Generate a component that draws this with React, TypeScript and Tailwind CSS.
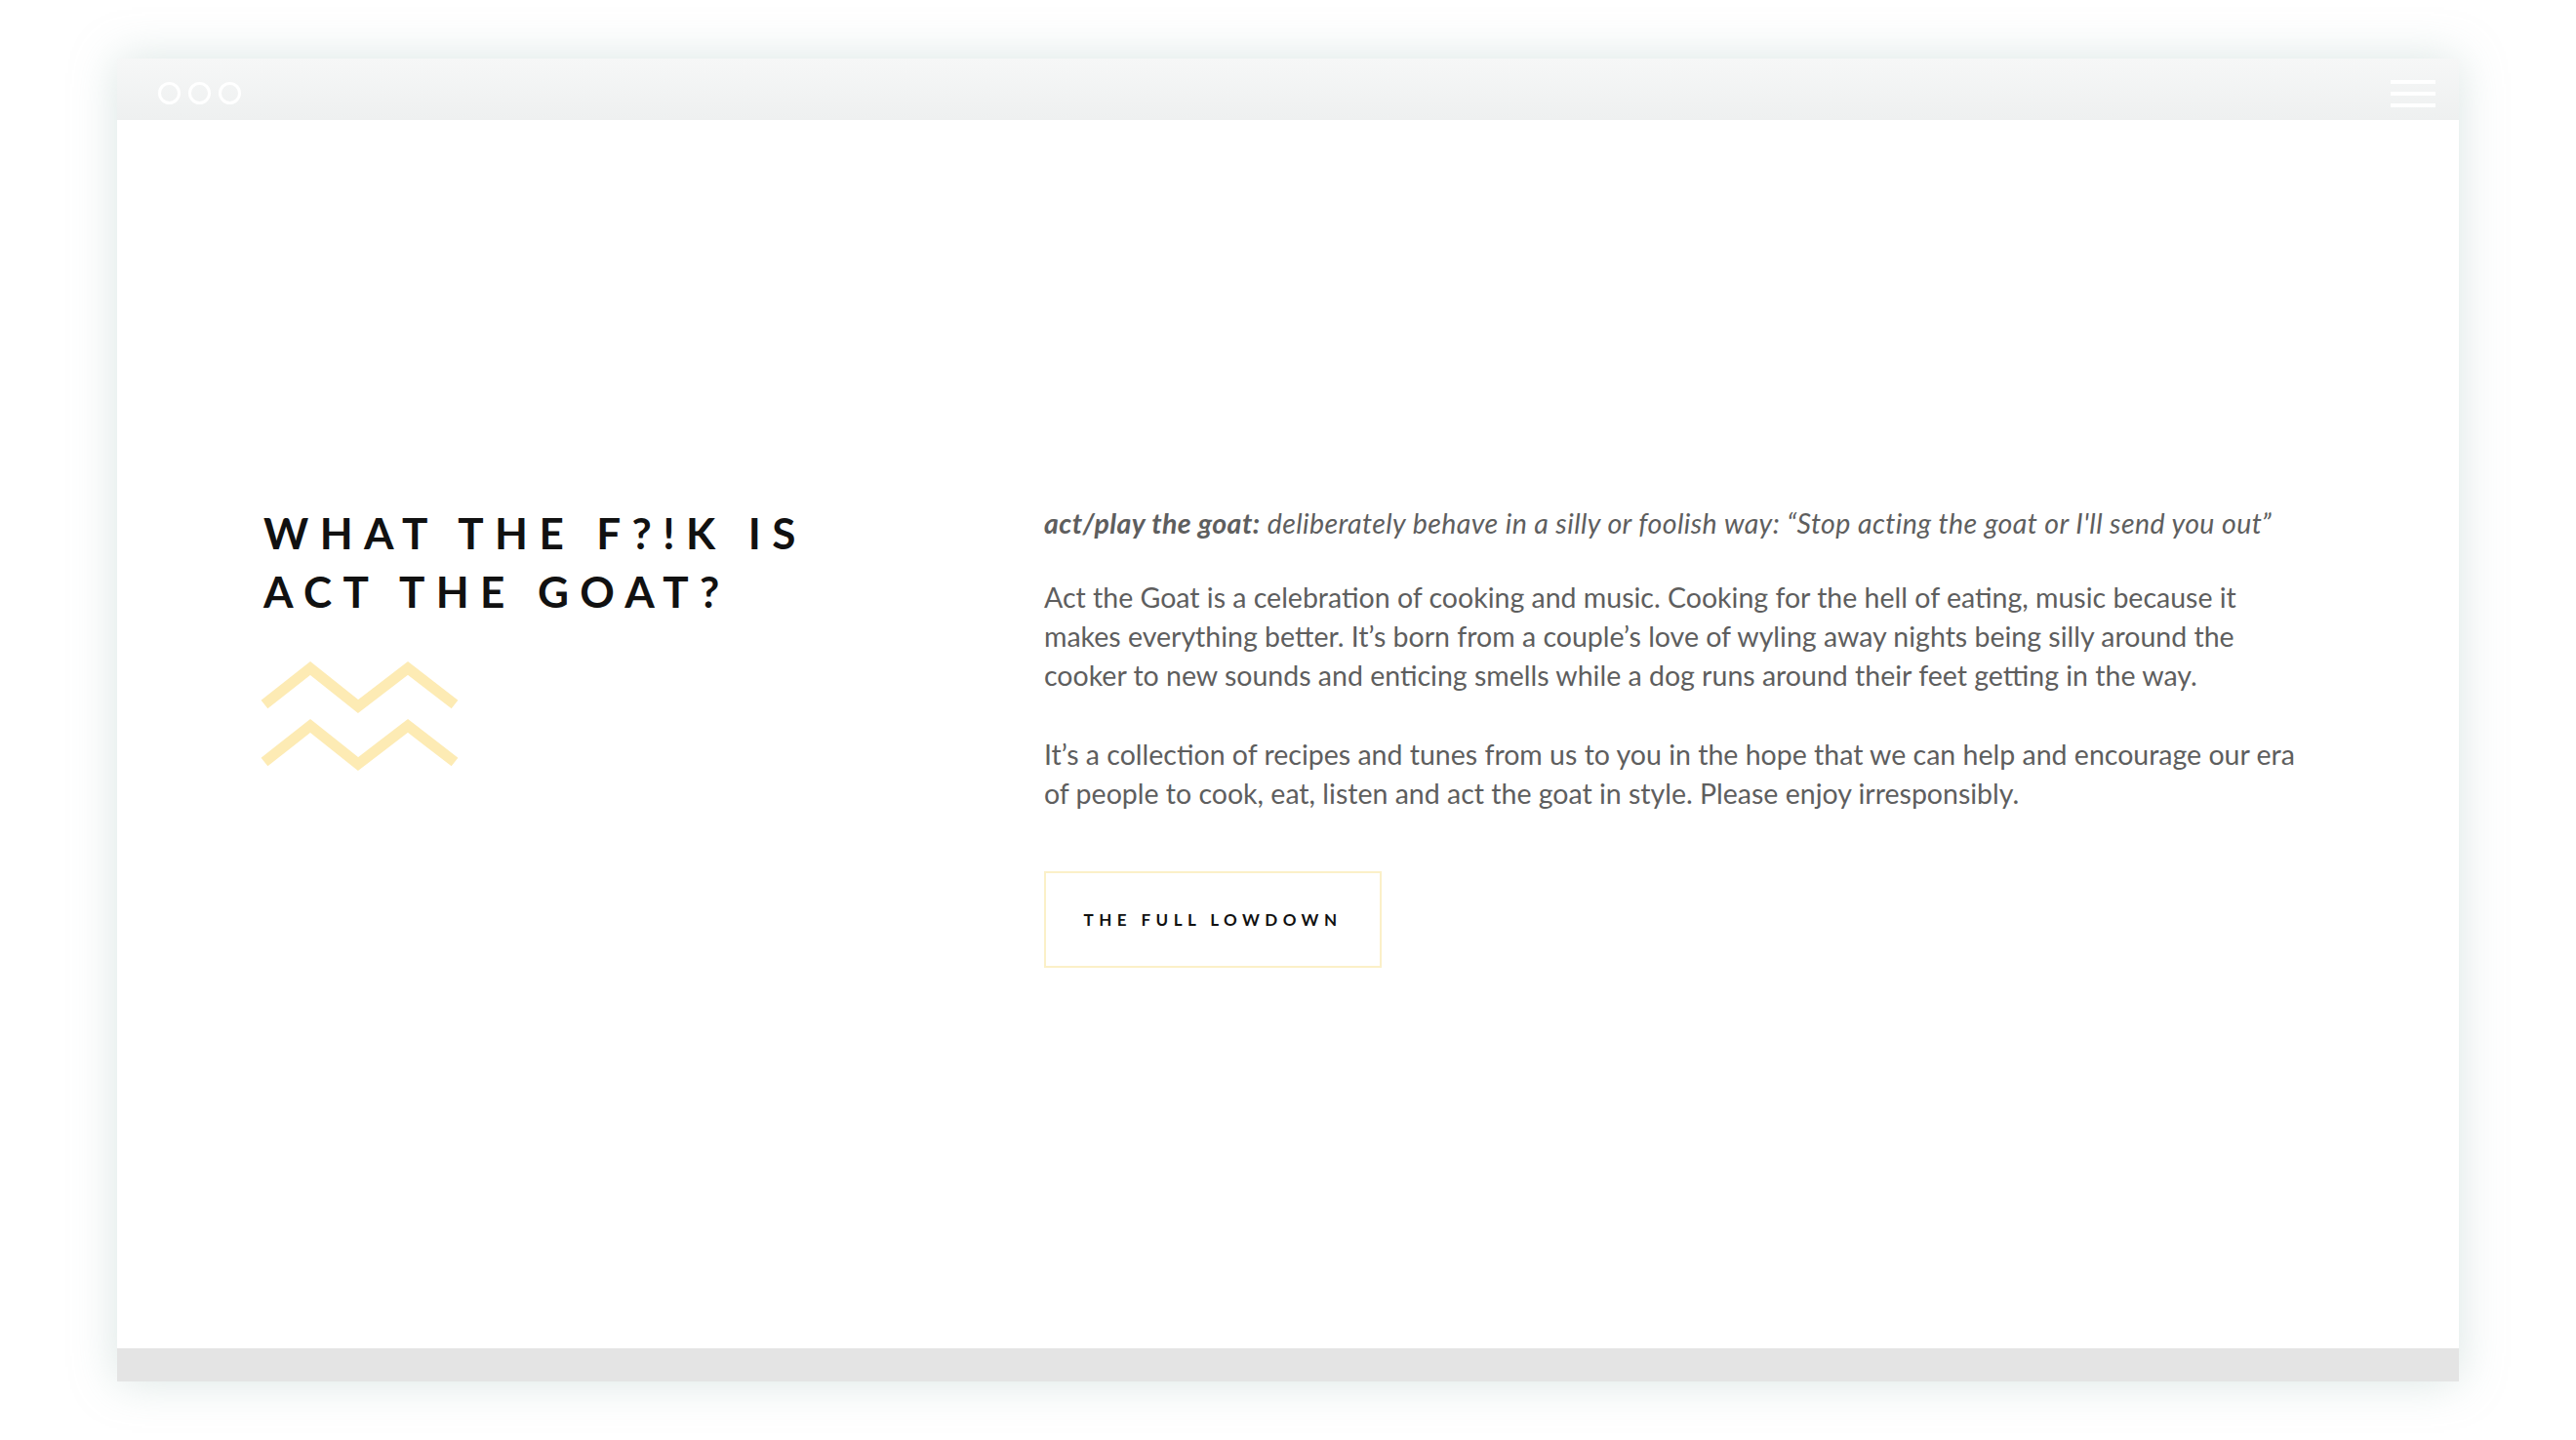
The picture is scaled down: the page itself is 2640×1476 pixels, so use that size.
export default function App() {
  return (
    <div className="min-h-screen w-full bg-white pt-[60px] px-[120px]">
      <div className="flex flex-col w-[2400px] shadow-[0_0_44px_rgba(150,180,175,0.35)]">
        {/* browser chrome */}
        <div className="flex h-[63px] items-center justify-between bg-gradient-to-b from-[#f6f7f7] to-[#eef0f0] pl-[42px] pr-[24px] pt-[8px]">
          <div className="flex gap-[8px]">
            <span className="block h-[23px] w-[23px] rounded-full border-[3px] border-white" />
            <span className="block h-[23px] w-[23px] rounded-full border-[3px] border-white" />
            <span className="block h-[23px] w-[23px] rounded-full border-[3px] border-white" />
          </div>
          <div className="flex flex-col gap-[8px]">
            <span className="block h-[4px] w-[46px] bg-white" />
            <span className="block h-[4px] w-[46px] bg-white" />
            <span className="block h-[4px] w-[46px] bg-white" />
          </div>
        </div>

        {/* page */}
        <div className="flex h-[1259px] bg-white pl-[150px] pt-[393px]">
          <div className="w-[800px]">
            <h1
              className="text-[44px] font-bold leading-[60px] tracking-[0.26em] text-[#111]"
              style={{ fontFamily: "Lato, 'Open Sans', sans-serif" }}
            >
              WHAT THE F?!K IS
              <br />
              ACT THE GOAT?
            </h1>
            <svg className="mt-[42px] ml-[-4px]" width="210" height="120" viewBox="0 0 210 120" fill="none">
              <polyline
                points="5,44 52,7 101,46 152,7 200,44"
                stroke="#fdebb4"
                strokeWidth="11"
                strokeLinejoin="miter"
              />
              <polyline
                points="5,103 52,66 101,105 152,66 200,103"
                stroke="#fdebb4"
                strokeWidth="11"
                strokeLinejoin="miter"
              />
            </svg>
          </div>

          <div
            className="w-[1340px] text-[28.5px] leading-[40px] text-[#5e5e5e]"
            style={{ fontFamily: "Lato, 'Open Sans', sans-serif" }}
          >
            <p className="italic tracking-[0.015em]">
              <span className="font-bold">act/play the goat:</span> deliberately behave in a silly or foolish way:
              “Stop acting the goat or I'll send you out”
            </p>
            <p className="mt-[36px]">
              Act the Goat is a celebration of cooking and music. Cooking for the hell of eating, music because it
              <br />
              makes everything better. It’s born from a couple’s love of wyling away nights being silly around the
              <br />
              cooker to new sounds and enticing smells while a dog runs around their feet getting in the way.
            </p>
            <p className="mt-[41px]">
              It’s a collection of recipes and tunes from us to you in the hope that we can help and encourage our era
              <br />
              of people to cook, eat, listen and act the goat in style. Please enjoy irresponsibly.
            </p>
            <button
              className="mt-[60px] flex h-[99px] w-[346px] items-center justify-center border-2 border-[#fbf0c8] bg-white text-[17px] font-bold tracking-[0.32em] text-[#111]"
              style={{ fontFamily: "Lato, 'Open Sans', sans-serif" }}
            >
              THE FULL LOWDOWN
            </button>
          </div>
        </div>

        {/* bottom strip */}
        <div className="h-[34px] bg-[#e4e4e4]" />
      </div>
    </div>
  );
}
